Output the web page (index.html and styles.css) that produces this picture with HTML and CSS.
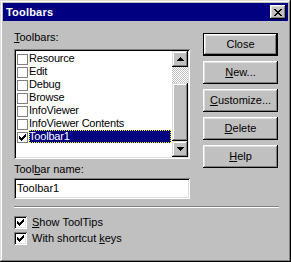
FILE: index.html
```html
<!DOCTYPE html>
<html lang="en">
<head>
  <meta charset="UTF-8">
  <title>Toolbars</title>
  <link rel="stylesheet" href="styles.css">
</head>
<body>
  <div class="window">
    <div class="titlebar">
      <span class="title">Toolbars</span>
      <span class="close-btn">
        <svg width="8" height="7" viewBox="0 0 8 7" shape-rendering="crispEdges"><path d="M0 0h2v1H0zM6 0h2v1H6zM1 1h2v1H1zM5 1h2v1H5zM2 2h4v1H2zM3 3h2v1H3zM2 4h4v1H2zM1 5h2v1H1zM5 5h2v1H5zM0 6h2v1H0zM6 6h2v1H6z" fill="#000"/></svg>
      </span>
    </div>
    <div class="content">
      <div class="top">
        <div class="left">
          <div class="label"><u>T</u>oolbars:</div>
          <div class="listbox">
            <div class="items">
              <div class="item"><span class="box"></span><span class="text">Resource</span></div>
              <div class="item"><span class="box"></span><span class="text">Edit</span></div>
              <div class="item"><span class="box"></span><span class="text">Debug</span></div>
              <div class="item"><span class="box"></span><span class="text">Browse</span></div>
              <div class="item"><span class="box"></span><span class="text">InfoViewer</span></div>
              <div class="item"><span class="box"></span><span class="text">InfoViewer Contents</span></div>
              <div class="item selected">
                <span class="box"><svg width="7" height="7" viewBox="0 0 7 7" shape-rendering="crispEdges"><path d="M6 0h1v1H6zM5 1h2v1H5zM0 2h1v1H0zM4 2h3v1H4zM0 3h2v1H0zM3 3h3v1H3zM0 4h5v1H0zM1 5h3v1H1zM2 6h1v1H2z" fill="#000"/></svg></span>
                <span class="text">Toolbar1</span>
              </div>
            </div>
            <div class="scrollbar">
              <div class="arrow">
                <svg width="7" height="4" viewBox="0 0 7 4" shape-rendering="crispEdges"><path d="M3 0h1v1H3zM2 1h3v1H2zM1 2h5v1H1zM0 3h7v1H0z" fill="#000"/></svg>
              </div>
              <div class="track"></div>
              <div class="thumb"></div>
              <div class="arrow">
                <svg width="7" height="4" viewBox="0 0 7 4" shape-rendering="crispEdges"><path d="M0 0h7v1H0zM1 1h5v1H1zM2 2h3v1H2zM3 3h1v1H3z" fill="#000"/></svg>
              </div>
            </div>
          </div>
          <div class="label name-label">Tool<u>b</u>ar name:</div>
          <div class="field">Toolbar1</div>
        </div>
        <div class="buttons">
          <div class="btn default">Close</div>
          <div class="btn"><u>N</u>ew...</div>
          <div class="btn"><u>C</u>ustomize...</div>
          <div class="btn"><u>D</u>elete</div>
          <div class="btn"><u>H</u>elp</div>
        </div>
      </div>
      <div class="separator"></div>
      <div class="check-row">
        <span class="checkbox"><svg width="7" height="7" viewBox="0 0 7 7" shape-rendering="crispEdges"><path d="M6 0h1v1H6zM5 1h2v1H5zM0 2h1v1H0zM4 2h3v1H4zM0 3h2v1H0zM3 3h3v1H3zM0 4h5v1H0zM1 5h3v1H1zM2 6h1v1H2z" fill="#000"/></svg></span>
        <span><u>S</u>how ToolTips</span>
      </div>
      <div class="check-row">
        <span class="checkbox"><svg width="7" height="7" viewBox="0 0 7 7" shape-rendering="crispEdges"><path d="M6 0h1v1H6zM5 1h2v1H5zM0 2h1v1H0zM4 2h3v1H4zM0 3h2v1H0zM3 3h3v1H3zM0 4h5v1H0zM1 5h3v1H1zM2 6h1v1H2z" fill="#000"/></svg></span>
        <span>With shortcut <u>k</u>eys</span>
      </div>
    </div>
  </div>
</body>
</html>
```

FILE: styles.css
```css
body {
  margin: 0;
  font-family: 'Liberation Sans', Arial, sans-serif;
  font-size: 11px;
  line-height: 13px;
  color: #000;
  background: #c0c0c0;
}
.window {
  width: 291px;
  height: 262px;
  box-sizing: border-box;
  padding: 3px;
  background: #c0c0c0;
  box-shadow: inset -1px -1px #000, inset 1px 1px #dfdfdf, inset -2px -2px #808080, inset 2px 2px #fff;
}
.titlebar {
  height: 18px;
  background: #000080;
  display: flex;
  align-items: center;
  justify-content: space-between;
  padding: 0 2px 0 3px;
}
.title {
  color: #fff;
  font-weight: bold;
  letter-spacing: 0.2px;
}
.close-btn {
  width: 16px;
  height: 14px;
  display: flex;
  align-items: center;
  justify-content: center;
  background: #c0c0c0;
  box-shadow: inset -1px -1px #000, inset 1px 1px #fff, inset -2px -2px #808080, inset 2px 2px #dfdfdf;
}
.close-btn svg {
  margin-left: -1px;
}
.content {
  padding: 10px 9px 0 11px;
}
.top {
  display: flex;
  gap: 13px;
}
.left {
  width: 176px;
}
.label {
  margin-bottom: 5px;
}
.listbox {
  height: 110px;
  box-sizing: border-box;
  padding: 2px;
  background: #fff;
  display: flex;
  box-shadow: inset 1px 1px #808080, inset -1px -1px #fff, inset 2px 2px #000, inset -2px -2px #dfdfdf;
}
.items {
  flex: 1;
  padding: 1px 1px 0 1px;
  letter-spacing: -0.2px;
}
.item {
  display: flex;
  height: 13px;
}
.box {
  width: 11px;
  height: 11px;
  box-sizing: border-box;
  margin: 2px 1px 0 0;
  border: 1px solid #808080;
  display: flex;
  align-items: center;
  justify-content: center;
}
.text {
  flex: 1;
  padding-left: 0;
}
.selected .text {
  background: #000080;
  color: #fff;
  outline: 1px dotted #ffff00;
  outline-offset: -1px;
}
.scrollbar {
  width: 16px;
  display: flex;
  flex-direction: column;
}
.arrow {
  height: 16px;
  display: flex;
  align-items: center;
  justify-content: center;
  background: #c0c0c0;
  box-shadow: inset -1px -1px #000, inset 1px 1px #dfdfdf, inset -2px -2px #808080, inset 2px 2px #fff;
}
.track {
  height: 16px;
  background: repeating-conic-gradient(#c0c0c0 0 25%, #fff 0 50%) 0 0 / 2px 2px;
}
.thumb {
  flex: 1;
  background: #c0c0c0;
  box-shadow: inset -1px -1px #000, inset 1px 1px #dfdfdf, inset -2px -2px #808080, inset 2px 2px #fff;
}
.name-label {
  margin-top: 4px;
  margin-bottom: 2px;
}
.field {
  height: 21px;
  box-sizing: border-box;
  padding: 4px 3px 0;
  background: #fff;
  box-shadow: inset 1px 1px #808080, inset -1px -1px #fff, inset 2px 2px #000, inset -2px -2px #dfdfdf;
}
.buttons {
  width: 75px;
  margin-top: 2px;
  display: flex;
  flex-direction: column;
  gap: 5px;
}
.btn {
  height: 23px;
  box-sizing: border-box;
  display: flex;
  align-items: center;
  justify-content: center;
  background: #c0c0c0;
  box-shadow: inset -1px -1px #000, inset 1px 1px #fff, inset -2px -2px #808080, inset 2px 2px #dfdfdf;
}
.btn.default {
  border: 1px solid #000;
}
.separator {
  margin-top: 7px;
  height: 1px;
  border-top: 1px solid #808080;
  border-bottom: 1px solid #fff;
  height: 0;
}
.check-row {
  display: flex;
  gap: 5px;
  margin-top: 8px;
}
.check-row + .check-row {
  margin-top: 3px;
}
.checkbox {
  width: 13px;
  height: 13px;
  box-sizing: border-box;
  display: flex;
  align-items: center;
  justify-content: center;
  background: #fff;
  box-shadow: inset 1px 1px #808080, inset -1px -1px #fff, inset 2px 2px #000, inset -2px -2px #dfdfdf;
}
```
